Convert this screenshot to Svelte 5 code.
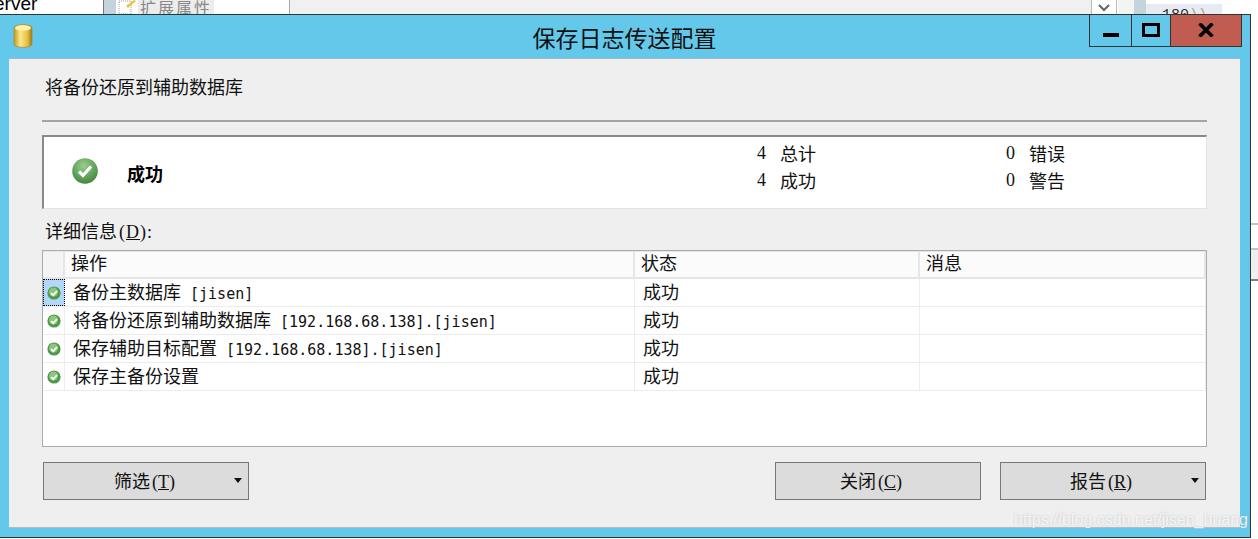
<script>
  const rows = [
    { name: "备份主数据库", tag: " [jisen]", status: "成功", selected: true },
    { name: "将备份还原到辅助数据库", tag: " [192.168.68.138].[jisen]", status: "成功" },
    { name: "保存辅助目标配置", tag: " [192.168.68.138].[jisen]", status: "成功" },
    { name: "保存主备份设置", tag: "", status: "成功" }
  ];
</script>

<div class="page">
  <div class="behind">
    <div class="b-left"><span class="cut">erver</span></div>
    <div class="b-gap"></div>
    <div class="b-tab">
      <svg class="b-icon" width="18" height="14" viewBox="0 0 18 14">
        <rect x="1" y="1" width="12" height="13" fill="#fff" stroke="#999" stroke-dasharray="1 1" />
        <path d="M8 6 L16 0 L18 1 L10 8 Z" fill="#e8c24a" />
      </svg>
      <span class="b-text">扩展属性</span>
    </div>
    <div class="b-mid"></div>
    <div class="b-select">
      <svg width="14" height="8" viewBox="0 0 14 8"><path d="M2 1 L7 6 L12 1" fill="none" stroke="#666" stroke-width="2" /></svg>
    </div>
    <div class="b-side"></div>
    <div class="b-code"><span class="cut2">180<em>))</em></span></div>
    <div class="b-end"></div>
  </div>

  <div class="stage">
    <div class="window">
      <div class="titlebar">
        <svg class="dbicon" width="20" height="26" viewBox="0 0 20 26">
          <defs>
            <linearGradient id="gold" x1="0" x2="1" y1="0" y2="0">
              <stop offset="0" stop-color="#c49a20" />
              <stop offset="0.35" stop-color="#fbe88e" />
              <stop offset="0.75" stop-color="#e8bf3c" />
              <stop offset="1" stop-color="#9c7414" />
            </linearGradient>
          </defs>
          <path d="M1 5 C1 0.5 19 0.5 19 5 V21 C19 25.5 1 25.5 1 21 Z" fill="url(#gold)" stroke="#a98a3c" stroke-width="0.8" />
          <ellipse cx="10" cy="5" rx="8" ry="2.8" fill="#fdf0a8" />
        </svg>
        <div class="title">保存日志传送配置</div>
        <div class="controls">
          <div class="ctl min"><span class="min-bar"></span></div>
          <div class="ctl max"><span class="max-box"></span></div>
          <div class="ctl close">
            <svg width="16" height="14" viewBox="0 0 16 14"><path d="M1.5 0.5 L14.5 13.5 M14.5 0.5 L1.5 13.5" stroke="#000" stroke-width="3.6" /></svg>
          </div>
        </div>
      </div>

      <div class="body">
        <div class="heading">将备份还原到辅助数据库</div>
        <div class="rule"></div>

        <div class="summary">
          <svg class="okbig" width="26" height="26" viewBox="0 0 26 26">
            <defs>
              <radialGradient id="greenbig" cx="0.45" cy="0.3" r="0.8">
                <stop offset="0" stop-color="#9ccc90" />
                <stop offset="0.6" stop-color="#5c9f55" />
                <stop offset="1" stop-color="#3a7a38" />
              </radialGradient>
            </defs>
            <circle cx="13" cy="13" r="12.8" fill="url(#greenbig)" />
            <path d="M7 13.5 L11 17.5 L19 8.5" fill="none" stroke="#fff" stroke-width="3.2" />
          </svg>
          <strong class="result">成功</strong>
          <div class="counts first">
            <div class="count"><span class="num">4</span><span>总计</span></div>
            <div class="count"><span class="num">4</span><span>成功</span></div>
          </div>
          <div class="counts second">
            <div class="count"><span class="num">0</span><span>错误</span></div>
            <div class="count"><span class="num">0</span><span>警告</span></div>
          </div>
        </div>

        <div class="details-label">详细信息<span class="acc wide">(<u>D</u>):</span></div>

        <div class="grid">
          <div class="row head">
            <div class="c0"></div>
            <div class="c1">操作</div>
            <div class="c2">状态</div>
            <div class="c3">消息</div>
          </div>
          {#each rows as row}
            <div class="row item">
              <div class="c0" class:selected={row.selected}>
                <svg width="14" height="14" viewBox="0 0 14 14">
                  <circle cx="7" cy="7" r="6.6" fill="#4f9a48" />
                  <circle cx="6.5" cy="6" r="4.5" fill="#8cc67e" />
                  <path d="M4 7.2 L6.2 9.2 L10 5" fill="none" stroke="#fff" stroke-width="1.8" />
                </svg>
              </div>
              <div class="c1">{row.name}<span class="lat">{row.tag}</span></div>
              <div class="c2">{row.status}</div>
              <div class="c3"></div>
            </div>
          {/each}
        </div>

        <div class="buttons">
          <button class="btn filter"><span>筛选<span class="acc">(<u>T</u>)</span></span><i class="caret"></i></button>
          <div class="spacer"></div>
          <button class="btn shut"><span>关闭<span class="acc">(<u>C</u>)</span></span></button>
          <button class="btn report"><span>报告<span class="acc">(<u>R</u>)</span></span><i class="caret"></i></button>
        </div>
      </div>
    </div>

    <div class="rest">
      <div class="rest-line"></div>
      <div class="rest-white"></div>
      <div class="rest-line"></div>
      <div class="rest-gray"></div>
      <div class="rest-line dark"></div>
    </div>
  </div>

  <div class="watermark">https://blog.csdn.net/jisen_huang</div>
</div>

<style>
  :global(body) {
    margin: 0;
    background: #fff;
  }

  .page {
    position: relative;
    width: 1258px;
    height: 539px;
    overflow: hidden;
    font-family: "Noto Sans CJK SC", "Liberation Serif", serif;
    font-size: 18px;
    color: #111;
    background: #fff;
  }

  .lat {
    font-family: "DejaVu Sans Mono", "Liberation Mono", monospace;
    font-size: 15px;
    white-space: pre;
  }

  .acc {
    font-family: "Liberation Serif", serif;
    font-size: 18px;
    margin-left: 2px;
  }

  .acc.wide {
    letter-spacing: 1px;
  }

  .behind {
    display: flex;
    height: 14px;
    overflow: hidden;
  }

  .b-left {
    width: 104px;
    background: #fff;
    border-right: 1px solid #777;
    box-sizing: border-box;
    overflow: hidden;
  }

  .cut {
    display: block;
    margin: -7px 0 0 -6px;
    font: 19px/22px "Liberation Sans", sans-serif;
    color: #000;
  }

  .b-gap {
    width: 12px;
    background: #c4d4dc;
  }

  .b-tab {
    width: 174px;
    background: #fff;
    border-right: 1px solid #aaa;
    box-sizing: border-box;
    display: flex;
    gap: 2px;
  }

  .b-icon {
    flex: none;
    margin-left: 2px;
  }

  .b-text {
    display: block;
    height: 14px;
    padding: 0 2px;
    background: #ececec;
    color: #888;
    font-size: 16px;
    line-height: 14px;
    letter-spacing: 2px;
  }

  .b-mid {
    width: 801px;
    background: #f0f0f0;
  }

  .b-select {
    width: 26px;
    background: #fff;
    border: 1px solid #bbb;
    border-width: 0 1px;
    box-sizing: border-box;
    display: flex;
    justify-content: center;
    padding-top: 4px;
  }

  .b-side {
    width: 28px;
    background: linear-gradient(to right, #f4f4f4 16px, #c4d4dc 16px);
    margin-left: 1px;
  }

  .b-code {
    width: 76px;
    margin-top: 4px;
    background: #e6ebf3;
    overflow: hidden;
  }

  .cut2 {
    display: block;
    padding: 3px 0 0 16px;
    font: 15px/18px "Liberation Mono", monospace;
    color: #333;
  }

  .cut2 em {
    font-style: normal;
    color: #b9a27c;
  }

  .b-end {
    flex: 1;
    background: #fff;
  }

  .stage {
    display: flex;
    align-items: flex-start;
  }

  .window {
    flex: none;
    width: 1251px;
    height: 524px;
    box-sizing: border-box;
    background: #64c8eb;
    border-top: 1px solid #333;
    border-right: 1px solid #333;
    border-bottom: 1px solid #333;
    padding: 0 10px 9px 9px;
    display: flex;
    flex-direction: column;
  }

  .rest {
    flex: 1;
    padding-top: 209px;
  }

  .rest-line {
    height: 2px;
    background: #c4c4c4;
  }

  .rest-line.dark {
    background: #808080;
  }

  .rest-white {
    height: 23px;
    background: #fff;
  }

  .rest-gray {
    height: 29px;
    background: #efefef;
  }

  .titlebar {
    height: 43px;
    position: relative;
    flex: none;
  }

  .dbicon {
    position: absolute;
    left: 4px;
    top: 8px;
  }

  .title {
    text-align: center;
    font-size: 23px;
    line-height: 44px;
    color: #111;
  }

  .controls {
    position: absolute;
    top: 0;
    right: -2px;
    display: flex;
    height: 32px;
    box-sizing: border-box;
    border: 1px solid #333;
    border-top: none;
  }

  .ctl {
    display: flex;
    align-items: center;
    justify-content: center;
    box-sizing: border-box;
  }

  .min {
    width: 42px;
    border-right: 1px solid #333;
  }

  .min-bar {
    width: 16px;
    height: 4px;
    background: #000;
    margin-top: 8px;
  }

  .max {
    width: 39px;
    border-right: 1px solid #333;
  }

  .max-box {
    width: 18px;
    height: 14px;
    box-sizing: border-box;
    border: 3px solid #000;
    margin-top: -2px;
  }

  .close {
    width: 70px;
    background: #c15c50;
    padding-bottom: 2px;
  }

  .body {
    flex: 1;
    background: #efefef;
    border-top: 1px solid #9eb8c6;
    border-bottom: 1px solid #b0bcc4;
    padding: 0 33px;
    display: flex;
    flex-direction: column;
  }

  .heading {
    line-height: 24px;
    padding: 15px 0 0 3px;
    height: 40px;
    box-sizing: border-box;
    margin-bottom: 21px;
  }

  .rule {
    height: 2px;
    background: #a3a3a3;
  }

  .summary {
    margin-top: 13px;
    height: 74px;
    box-sizing: border-box;
    background: #fff;
    border-style: solid;
    border-width: 2px 1px 1px 2px;
    border-color: #8a8a8a #e3e3e3 #e3e3e3 #8a8a8a;
    display: flex;
    align-items: center;
  }

  .okbig {
    flex: none;
    margin: -4px 0 0 28px;
  }

  .result {
    margin: 0 0 0 29px;
    width: 630px;
    font-weight: 700;
    line-height: 24px;
    color: #000;
  }

  .counts {
    display: flex;
    flex-direction: column;
    gap: 5px;
    align-self: flex-start;
    margin-top: 5px;
  }

  .first {
    width: 249px;
  }

  .count {
    display: flex;
    height: 22px;
    line-height: 22px;
  }

  .num {
    width: 23px;
    font-family: "Liberation Serif", serif;
  }

  .details-label {
    margin-top: 10px;
    height: 24px;
    line-height: 22px;
    padding-left: 3px;
    margin-bottom: 7px;
  }

  .grid {
    height: 197px;
    box-sizing: border-box;
    background: #fff;
    border: 1px solid #ababab;
    flex: none;
  }

  .row {
    display: grid;
    grid-template-columns: 22px 570px 285px 1fr;
  }

  .head {
    height: 28px;
    background: #fbfbfb;
    border-bottom: 2px solid #e6e6e6;
    box-sizing: border-box;
    line-height: 21px;
  }

  .head > div {
    border-right: 2px solid #e6e6e6;
    border-top: 1px solid #e6e6e6;
    padding-left: 6px;
    box-sizing: border-box;
    height: 26px;
  }

  .head .c0 {
    background: #f4f4f4;
  }

  .item {
    height: 28px;
    box-sizing: border-box;
    border-bottom: 1px solid #ececec;
    line-height: 25px;
  }

  .item > div {
    border-right: 1px solid #ececec;
    padding-left: 8px;
    box-sizing: border-box;
    white-space: nowrap;
    overflow: hidden;
  }

  .item .c0 {
    padding: 0;
    display: flex;
    align-items: center;
    justify-content: center;
    height: 27px;
  }

  .item .c0.selected {
    background: #b3d7f8;
    outline: 1px dotted #000;
    outline-offset: -1px;
  }

  .buttons {
    display: flex;
    margin-top: 15px;
    padding: 0 1px;
    gap: 19px;
  }

  .spacer {
    flex: 1;
  }

  .btn {
    width: 206px;
    height: 38px;
    box-sizing: border-box;
    border: 1px solid #777;
    background: #dcdcdc;
    font: inherit;
    color: #111;
    position: relative;
    padding: 0 0 2px;
    text-align: center;
  }

  .filter {
    padding-right: 3px;
  }

  .shut {
    padding-right: 14px;
  }

  .report {
    padding-right: 4px;
  }

  .caret {
    position: absolute;
    right: 6px;
    top: 15px;
    width: 0;
    height: 0;
    border-left: 4px solid transparent;
    border-right: 4px solid transparent;
    border-top: 5px solid #111;
  }

  .watermark {
    position: absolute;
    right: 10px;
    top: 510px;
    font: 16px/20px "Liberation Sans", sans-serif;
    color: rgba(255, 255, 255, 0.8);
    text-shadow: 0 0 2px rgba(170, 170, 170, 0.7);
  }
</style>
